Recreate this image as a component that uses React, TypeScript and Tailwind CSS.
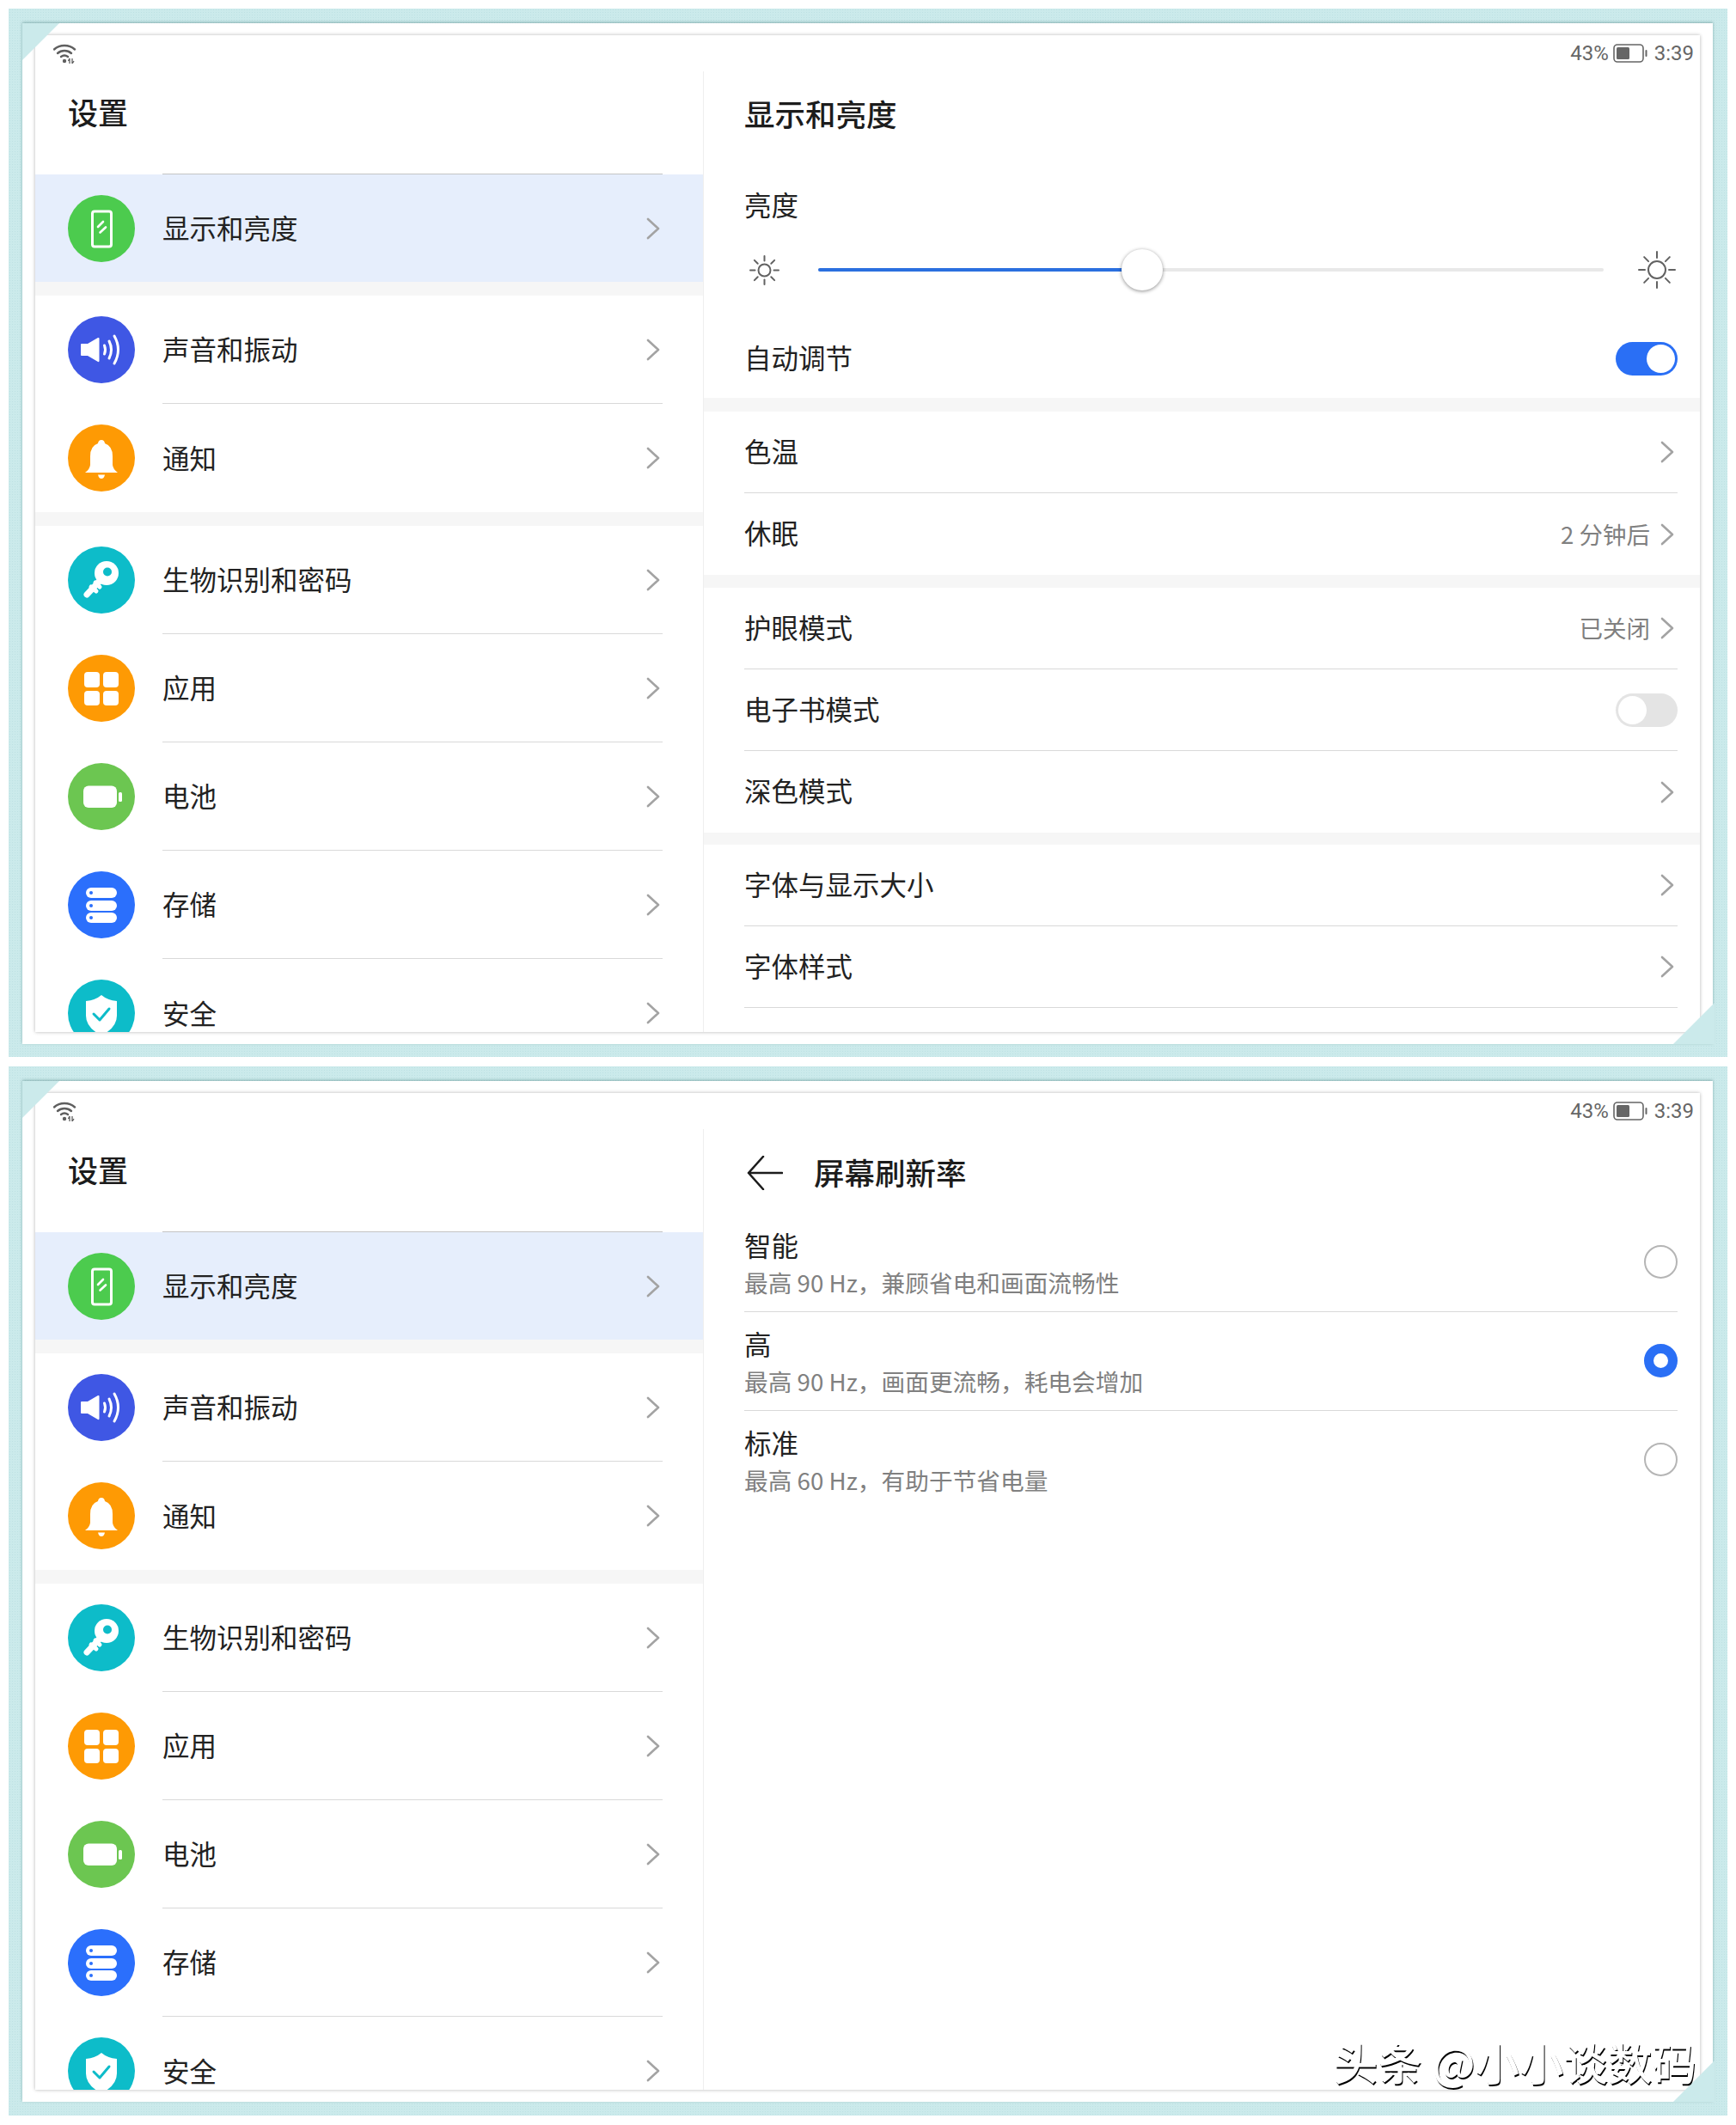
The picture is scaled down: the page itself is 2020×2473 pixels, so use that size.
import type { ReactNode } from 'react'

function Chevron() {
  return (
    <svg width="16" height="26" viewBox="0 0 16 26" fill="none" className="shrink-0">
      <path d="M2 2 L14 13 L2 24" stroke="#a3a3a3" strokeWidth="2.6" strokeLinecap="round" strokeLinejoin="round" />
    </svg>
  )
}

function WifiIcon() {
  return (
    <svg width="27" height="23" viewBox="0 0 27 23" fill="none">
      <path d="M1 6.5 C7.5 0.5 18.5 0.5 25 6.5" stroke="#5f5f5f" strokeWidth="2.4" strokeLinecap="round" />
      <path d="M5 11 C9.5 7 16.5 7 21 11" stroke="#5f5f5f" strokeWidth="2.4" strokeLinecap="round" />
      <path d="M9 15 C11.5 13 14.5 13 17 15" stroke="#5f5f5f" strokeWidth="2.4" strokeLinecap="round" />
      <circle cx="13" cy="20" r="2.2" fill="#5f5f5f" />
      <path d="M19 23 V17 L17.4 20 M22 17 V23 L24 20" stroke="#5f5f5f" strokeWidth="1.3" />
    </svg>
  )
}

function StatusBar() {
  return (
    <div className="flex h-[42px] items-center justify-between pl-[21px] pr-[7px] font-['Roboto',sans-serif] text-[24px] text-[#666666]">
      <WifiIcon />
      <div className="flex items-center">
        <span>43%</span>
        <svg width="40" height="22" viewBox="0 0 40 22" fill="none" className="ml-[5px] mr-[8px]">
          <rect x="1" y="1" width="34" height="20" rx="4" stroke="#666666" strokeWidth="1.6" />
          <rect x="4" y="4" width="15" height="14" rx="1.5" fill="#666666" />
          <rect x="37.5" y="7" width="2" height="8" rx="1" fill="#666666" />
        </svg>
        <span>3:39</span>
      </div>
    </div>
  )
}

function DisplayIcon() {
  return (
    <>
      <rect x="28.5" y="19" width="22" height="41" rx="2.5" stroke="white" strokeWidth="3" fill="none" />
      <path d="M35 37 L41 31 M37.5 43.5 L44 37.5" stroke="white" strokeWidth="2.6" strokeLinecap="round" />
    </>
  )
}

function SoundIcon() {
  return (
    <>
      <path d="M16 32 H23 L35 25 Q36.5 24.5 36.5 26 V52 Q36.5 53.5 35 53 L23 46 H16 Q15 46 15 45 V33 Q15 32 16 32 Z" fill="white" />
      <path d="M42.5 34 Q44.5 39 42.5 44" stroke="white" strokeWidth="3" strokeLinecap="round" fill="none" />
      <path d="M48 29 Q53 39 48 49" stroke="white" strokeWidth="3" strokeLinecap="round" fill="none" />
      <path d="M54 23 Q63 39 54 55" stroke="white" strokeWidth="3" strokeLinecap="round" fill="none" />
    </>
  )
}

function BellIcon() {
  return (
    <>
      <path d="M39 18 Q42.5 18 43 22 Q52 25 52 37 V47 Q52.5 52 58 56 H20 Q25.5 52 26 47 V37 Q26 25 35 22 Q35.5 18 39 18 Z" fill="white" />
      <path d="M35 58.5 H43 Q42 63 39 63 Q36 63 35 58.5 Z" fill="white" />
    </>
  )
}

function KeyIcon() {
  return (
    <>
      <circle cx="45" cy="31" r="14" fill="white" />
      <circle cx="46" cy="29.5" r="5" fill="#0dbcc9" />
      <path d="M38 39 L22 56" stroke="white" strokeWidth="7" strokeLinecap="round" />
      <path d="M27 47 L33 52 M32 42 L37 47" stroke="white" strokeWidth="5" strokeLinecap="round" />
    </>
  )
}

function AppsIcon() {
  return (
    <>
      <rect x="19" y="20" width="18" height="18" rx="4" fill="white" />
      <rect x="41" y="20" width="18" height="18" rx="4" fill="white" />
      <rect x="19" y="42" width="18" height="17" rx="4" fill="white" />
      <rect x="41" y="42" width="18" height="17" rx="4" fill="white" />
    </>
  )
}

function BatteryIcon() {
  return (
    <>
      <rect x="18" y="26.5" width="39" height="25.5" rx="6" fill="white" />
      <rect x="59" y="34" width="4" height="11" rx="1.5" fill="white" />
    </>
  )
}

function StorageIcon() {
  return (
    <>
      {[19, 34, 48].map((y) => (
        <g key={y}>
          <rect x="21" y={y} width="36" height="12" rx="6" fill="white" />
          <circle cx="27" cy={y + 6} r="2" fill="#2b6ffc" />
        </g>
      ))}
    </>
  )
}

function ShieldIcon() {
  return (
    <>
      <path d="M39 18 Q46 24 57 25 V42 Q57 56 39 65 Q21 56 21 42 V25 Q32 24 39 18 Z" fill="white" />
      <path d="M30 40 L37 47 L48 34" stroke="#0dbcc9" strokeWidth="3" fill="none" strokeLinecap="round" strokeLinejoin="round" />
    </>
  )
}

type Item = { label: string; color: string; icon: ReactNode; selected?: boolean; last?: boolean }

const groups: Item[][] = [
  [{ label: '显示和亮度', color: '#4ccb4e', icon: <DisplayIcon />, selected: true, last: true }],
  [
    { label: '声音和振动', color: '#3f57e4', icon: <SoundIcon /> },
    { label: '通知', color: '#fe9a04', icon: <BellIcon />, last: true },
  ],
  [
    { label: '生物识别和密码', color: '#0dbcc9', icon: <KeyIcon /> },
    { label: '应用', color: '#fe9a04', icon: <AppsIcon /> },
    { label: '电池', color: '#6cc651', icon: <BatteryIcon /> },
    { label: '存储', color: '#2b6ffc', icon: <StorageIcon /> },
    { label: '安全', color: '#0dbcc9', icon: <ShieldIcon />, last: true },
  ],
]

function SideRow({ item }: { item: Item }) {
  return (
    <div className={`flex items-center pl-[38px] ${item.selected ? 'h-[125px] bg-[#e6eefc]' : 'h-[126px]'}`}>
      <svg width="78" height="78" viewBox="0 0 78 78" className="shrink-0">
        <circle cx="39" cy="39" r="39" fill={item.color} />
        {item.icon}
      </svg>
      <div
        className={`ml-[32px] mr-[47px] flex h-full flex-1 items-center justify-between pr-[3px] ${
          item.last ? '' : 'border-b border-[#d9d9d9]'
        }`}
      >
        <span className="pb-[1px] text-[31.5px] text-[#222222]">{item.label}</span>
        <Chevron />
      </div>
    </div>
  )
}

function SideList() {
  return (
    <div className="h-full w-[778px] shrink-0 border-r border-[#efefef]">
      <div className="h-[119px] pl-[38px] pt-[28px] text-[35px] font-medium leading-[38px] text-[#1c1c1c]">设置</div>
      <div className="ml-[148px] mr-[47px] border-t border-[#c4c4c4]" />
      {groups.map((group, i) => (
        <div key={i}>
          {i > 0 && <div className="h-[16px] bg-[#f6f6f6]" />}
          {group.map((item) => (
            <SideRow key={item.label} item={item} />
          ))}
        </div>
      ))}
    </div>
  )
}

function Sun({ size, r }: { size: number; r: number }) {
  const c = size / 2
  const angles = [0, 45, 90, 135, 180, 225, 270, 315]
  return (
    <svg width={size} height={size} viewBox={`0 0 ${size} ${size}`} fill="none">
      <circle cx={c} cy={c} r={r} stroke="#626262" strokeWidth="2" />
      {angles.map((a) => (
        <line
          key={a}
          x1={c}
          y1={1}
          x2={c}
          y2={c - r - 4}
          stroke="#626262"
          strokeWidth="2"
          strokeLinecap="round"
          transform={`rotate(${a} ${c} ${c})`}
        />
      ))}
    </svg>
  )
}

function Toggle({ on }: { on?: boolean }) {
  if (on) {
    return (
      <div className="flex h-[39px] w-[72px] items-center justify-end rounded-full bg-[#2a6ff5] pr-[3px]">
        <div className="h-[33px] w-[33px] rounded-full bg-white" />
      </div>
    )
  }
  return (
    <div className="flex h-[39px] w-[72px] items-center rounded-full bg-[#e4e4e4] pl-[3px]">
      <div className="h-[33px] w-[33px] rounded-full bg-white" />
    </div>
  )
}

function Row({ label, value, toggle, last }: { label?: string; value?: string; toggle?: boolean; last?: boolean }) {
  return (
    <div className="pl-[47px] pr-[26px]">
      <div className={`flex h-[95px] items-center justify-between ${last ? '' : 'border-b border-[#d9d9d9]'}`}>
        <span className="pb-[3px] text-[31.5px] text-[#222222]">{label}</span>
        {toggle ? (
          <Toggle />
        ) : (
          <div className="flex items-center gap-[12px] pr-[4px]">
            {value && <span className="text-[27.5px] text-[#808080]">{value}</span>}
            <Chevron />
          </div>
        )}
      </div>
    </div>
  )
}

function BrightnessPanel() {
  return (
    <div className="min-w-0 flex-1">
      <div className="pl-[47px] pr-[26px] pt-[30px]">
        <div className="text-[35.5px] font-medium leading-[38px] text-[#1c1c1c]">显示和亮度</div>
        <div className="mt-[67px] text-[31.5px] leading-[38px] text-[#222222]">亮度</div>
        <div className="mt-[34px] flex h-[48px] items-center pl-[2px]">
          <div className="flex w-[42px] justify-center">
            <Sun size={35} r={7} />
          </div>
          <div className="relative ml-[42px] flex h-[4px] w-[914px] rounded-full bg-[#e8e8e8]">
            <div className="h-full w-[377px] rounded-full bg-[#2a6fdf]" />
            <div className="absolute left-[353px] top-[-22px] h-[48px] w-[48px] rounded-full bg-white shadow-[0_1px_4px_rgba(0,0,0,0.45)]" />
          </div>
          <div className="ml-[40px]">
            <Sun size={44} r={10} />
          </div>
        </div>
        <div className="mt-[33px] flex h-[92px] items-center justify-between">
          <span className="pb-[3px] text-[31.5px] text-[#222222]">自动调节</span>
          <Toggle on />
        </div>
      </div>
      <div className="h-[16px] bg-[#f6f6f6]" />
      <Row label="色温" />
      <Row label="休眠" value="2 分钟后" last />
      <div className="h-[15px] bg-[#f6f6f6]" />
      <Row label="护眼模式" value="已关闭" />
      <Row label="电子书模式" toggle />
      <Row label="深色模式" last />
      <div className="h-[14px] bg-[#f6f6f6]" />
      <Row label="字体与显示大小" />
      <Row label="字体样式" />
      <Row toggle last />
    </div>
  )
}

function RateOption({ title, desc, checked, last }: { title: string; desc: string; checked?: boolean; last?: boolean }) {
  return (
    <div className={`flex h-[115px] items-start justify-between pt-[17px] ${last ? '' : 'border-b border-[#d9d9d9]'}`}>
      <div>
        <div className="text-[31.5px] leading-[38px] text-[#222222]">{title}</div>
        <div className="mt-[6px] text-[27.7px] leading-[38px] text-[#808080]">{desc}</div>
      </div>
      <div
        className={`mt-[20px] h-[39px] w-[39px] rounded-full bg-white ${
          checked ? 'border-[11px] border-[#2a6ff5]' : 'border-2 border-[#b5b5b5]'
        }`}
      />
    </div>
  )
}

function RefreshRatePanel() {
  return (
    <div className="min-w-0 flex-1 pl-[47px] pr-[26px] pt-[32px]">
      <div className="flex h-[38px] items-center">
        <svg width="42" height="40" viewBox="0 0 42 40" fill="none" className="ml-[3px] mr-[36px]">
          <path d="M19 1 L2 20 L19 39 M2 20 H41" stroke="#1c1c1c" strokeWidth="2.6" strokeLinecap="round" strokeLinejoin="round" />
        </svg>
        <span className="pb-[3px] text-[35.5px] font-medium leading-[38px] text-[#1c1c1c]">屏幕刷新率</span>
      </div>
      <div className="mt-[28px]">
        <RateOption title="智能" desc="最高 90 Hz，兼顾省电和画面流畅性" />
        <RateOption title="高" desc="最高 90 Hz，画面更流畅，耗电会增加" checked />
        <RateOption title="标准" desc="最高 60 Hz，有助于节省电量" last />
      </div>
    </div>
  )
}

function Frame({ children, watermark }: { children: ReactNode; watermark?: boolean }) {
  return (
    <div
      className={`relative w-[2000px] bg-[#cbeaeb] bg-[radial-gradient(#bde1e3_1px,transparent_1px)] bg-[length:3px_3px] pl-[16px] pr-[17px] pt-[17px] ${
        watermark ? 'h-[1221px] pb-[16px]' : 'h-[1220px] pb-[15px]'
      }`}
    >
      <div className="h-full bg-white pb-[14px] pl-[15px] pr-[15px] pt-[14px] shadow-[0_-1px_3px_rgba(80,130,130,0.55)]">
        <div className="flex h-full flex-col overflow-hidden bg-white shadow-[0_0_4px_rgba(0,0,0,0.3)]">
          <StatusBar />
          <div className="flex min-h-0 flex-1 overflow-hidden">
            <SideList />
            {children}
          </div>
        </div>
      </div>
      {/* folded corners of the picture frame */}
      <svg width="44" height="44" viewBox="0 0 44 44" className="absolute left-[16px] top-[17px]">
        <polygon points="0,0 43,0 0,43" fill="#cbeaeb" />
      </svg>
      <svg width="48" height="48" viewBox="0 0 48 48" className={`absolute right-[15px] ${watermark ? 'bottom-[16px]' : 'bottom-[15px]'}`}>
        <polygon points="48,0 48,48 0,48" fill="#cbeaeb" />
      </svg>
      {watermark && (
        <div className="absolute bottom-[33px] right-[36px] text-[51.5px] font-medium leading-[60px] text-white [text-shadow:1px_2px_0_#000]">
          头条 @小小谈数码
        </div>
      )}
    </div>
  )
}

export default function App() {
  return (
    <div className="h-[2473px] w-[2020px] overflow-hidden bg-white pl-[10px] pt-[10px] font-['Noto_Sans_CJK_SC','Noto_Sans',sans-serif]">
      <Frame>
        <BrightnessPanel />
      </Frame>
      <div className="mt-[11px]">
        <Frame watermark>
          <RefreshRatePanel />
        </Frame>
      </div>
    </div>
  )
}
